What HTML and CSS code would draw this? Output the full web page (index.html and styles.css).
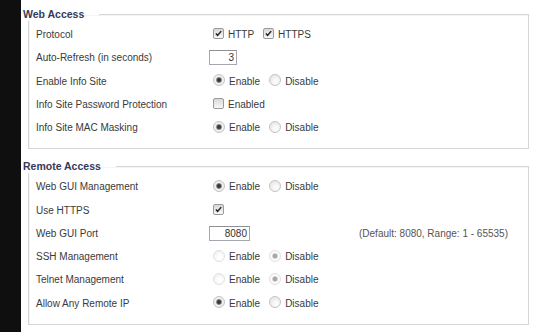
FILE: index.html
```html
<!DOCTYPE html>
<html>
<head>
	<title>Management</title>
	<link rel="stylesheet" href="styles.css">
</head>
<body>

	<div class="page">

		<fieldset class="box">
			<legend>Web Access</legend>

			<div class="row">
				<div class="lbl">Protocol</div>
				<div class="ctl">
					<input type="checkbox" class="cb" checked><span class="opt">HTTP</span>
					<input type="checkbox" class="cb" checked><span class="opt">HTTPS</span>
				</div>
			</div>
			<div class="row">
				<div class="lbl">Auto-Refresh (in seconds)</div>
				<div class="ctl"><input type="text" class="num small" value="3"></div>
			</div>
			<div class="row">
				<div class="lbl">Enable Info Site</div>
				<div class="ctl">
					<input type="radio" class="rd" name="info" checked><span class="opt">Enable</span>
					<input type="radio" class="rd" name="info"><span class="opt">Disable</span>
				</div>
			</div>
			<div class="row">
				<div class="lbl">Info Site Password Protection</div>
				<div class="ctl">
					<input type="checkbox" class="cb"><span class="opt">Enabled</span>
				</div>
			</div>
			<div class="row">
				<div class="lbl">Info Site MAC Masking</div>
				<div class="ctl">
					<input type="radio" class="rd" name="mac" checked><span class="opt">Enable</span>
					<input type="radio" class="rd" name="mac"><span class="opt">Disable</span>
				</div>
			</div>
		</fieldset>

		<fieldset class="box">
			<legend>Remote Access</legend>

			<div class="row">
				<div class="lbl">Web GUI Management</div>
				<div class="ctl">
					<input type="radio" class="rd" name="gui" checked><span class="opt">Enable</span>
					<input type="radio" class="rd" name="gui"><span class="opt">Disable</span>
				</div>
			</div>
			<div class="row">
				<div class="lbl">Use HTTPS</div>
				<div class="ctl"><input type="checkbox" class="cb" checked></div>
			</div>
			<div class="row">
				<div class="lbl">Web GUI Port</div>
				<div class="ctl"><input type="text" class="num wide" value="8080"></div>
				<div class="note">(Default: 8080, Range: 1 - 65535)</div>
			</div>
			<div class="row">
				<div class="lbl">SSH Management</div>
				<div class="ctl">
					<input type="radio" class="rd" name="ssh" disabled><span class="opt">Enable</span>
					<input type="radio" class="rd" name="ssh" checked disabled><span class="opt">Disable</span>
				</div>
			</div>
			<div class="row">
				<div class="lbl">Telnet Management</div>
				<div class="ctl">
					<input type="radio" class="rd" name="tel" disabled><span class="opt">Enable</span>
					<input type="radio" class="rd" name="tel" checked disabled><span class="opt">Disable</span>
				</div>
			</div>
			<div class="row">
				<div class="lbl">Allow Any Remote IP</div>
				<div class="ctl">
					<input type="radio" class="rd" name="any" checked><span class="opt">Enable</span>
					<input type="radio" class="rd" name="any"><span class="opt">Disable</span>
				</div>
			</div>
		</fieldset>

	</div>

</body>
</html>
```

FILE: styles.css
```css
body {margin: 0; background: #0f0f0f; font-family: "Liberation Sans", Arial, sans-serif; font-size: 10px; color: #3a3a3a;}
.page {margin-left: 21px; background: #fff; min-height: 332px; padding-top: 7px; box-sizing: border-box;}

.box {margin: 0 11px 10px 7px; padding: 2px 0 9px 7px; border: 1px solid #d6d6d6; box-shadow: inset 1px 1px 0 #f4f4f4;}
.box legend {margin-left: -13px; padding: 0 15px 0 0; font-weight: bold; font-size: 10.5px; line-height: 14px; color: #363a5a;}

.row {display: grid; grid-template-columns: 173px 150px auto; height: 23.25px; align-items: center;}
.ctl {display: flex; align-items: center;}
.opt {margin-right: 5px;}
.note {color: #555;}

.cb, .rd {appearance: none; -webkit-appearance: none; margin: 0 4px 2px 4px; flex: none;}
.cb {width: 11px; height: 11px; border: 1px solid #9a9a9a; border-radius: 2px;
		background: linear-gradient(#d8d8d8, #f8f8f8);}
.cb:checked {background: url("data:image/svg+xml,%3Csvg xmlns='http://www.w3.org/2000/svg' viewBox='0 0 11 11'%3E%3Cpath d='M2.3 5.6 L4.4 7.8 L8.8 2.6' fill='none' stroke='%23222' stroke-width='1.8'/%3E%3C/svg%3E") center/9px 9px no-repeat, linear-gradient(#d8d8d8, #f8f8f8);}
.rd {width: 12px; height: 12px; border: 1px solid #c4c4c4; border-radius: 50%;
		background: radial-gradient(circle at 60% 65%, #fafafa 20%, #dedede 100%);}
.rd:checked {background: radial-gradient(circle, #333 0, #444 1.8px, #9a9a9a 2.6px, #f4f4f4 3.6px, #dedede 100%);}
.rd:disabled {border-color: #e0e0e0; background: radial-gradient(circle at 60% 65%, #fff 20%, #ececec 100%);}
.rd:disabled:checked {background: radial-gradient(circle, #a0a0a0 0, #aaa 1.8px, #d6d6d6 2.6px, #fff 3.6px, #ececec 100%);}

.num {box-sizing: border-box; height: 15px; margin: 0; padding: 0 2px; border: 1px solid #a5a8ae; border-top-color: #8e9096;
		font-family: "Liberation Sans", Arial, sans-serif; font-size: 10px; color: #333; text-align: right;}
.small {width: 28px;}
.wide {width: 41px;}
```
